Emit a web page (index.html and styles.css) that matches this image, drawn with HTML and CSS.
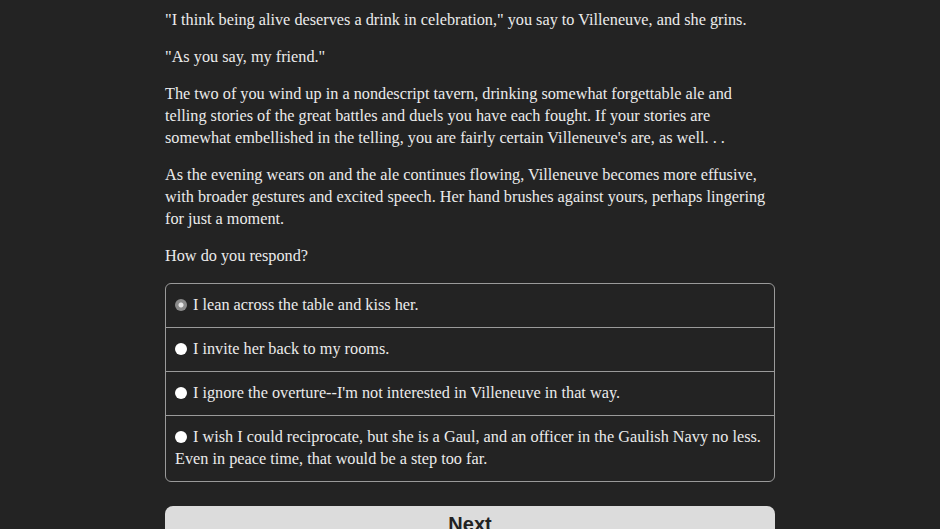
FILE: index.html
```html
<!DOCTYPE html>
<html>
<head>
<meta charset="utf-8">
<link rel="stylesheet" href="styles.css">
</head>
<body>
<main class="page">
  <p>"I think being alive deserves a drink in celebration," you say to Villeneuve, and she grins.</p>
  <p>"As you say, my friend."</p>
  <p>The two of you wind up in a nondescript tavern, drinking somewhat forgettable ale and telling stories of the great battles and duels you have each fought. If your stories are somewhat embellished in the telling, you are fairly certain Villeneuve's are, as well. . .</p>
  <p>As the evening wears on and the ale continues flowing, Villeneuve becomes more effusive, with broader gestures and excited speech. Her hand brushes against yours, perhaps lingering for just a moment.</p>
  <p>How do you respond?</p>
  <div class="choices">
    <label class="choice"><span class="radio radio-selected"></span>I lean across the table and kiss her.</label>
    <label class="choice"><span class="radio"></span>I invite her back to my rooms.</label>
    <label class="choice"><span class="radio"></span>I ignore the overture--I'm not interested in Villeneuve in that way.</label>
    <label class="choice"><span class="radio"></span>I wish I could reciprocate, but she is a Gaul, and an officer in the Gaulish Navy no less. Even in peace time, that would be a step too far.</label>
  </div>
  <button class="next">Next</button>
</main>
</body>
</html>
```
FILE: styles.css
```css
html, body {
  margin: 0;
  padding: 0;
  background: #232323;
}
body {
  color: #ebebeb;
  font-family: "Liberation Serif", "Times New Roman", serif;
  font-size: 16.25px;
  line-height: 22px;
}
.page {
  width: 610px;
  margin: 0 auto;
  padding-top: 9px;
}
.page p {
  margin: 0 0 15px 0;
}
.choices {
  border: 1px solid #9a9a9a;
  border-radius: 6px;
  margin-top: 16px;
}
.choice {
  display: block;
  padding: 10px 9px 11px 9px;
  border-top: 1px solid #9a9a9a;
}
.choice:first-child {
  border-top: none;
}
.radio {
  display: inline-block;
  width: 12px;
  height: 12px;
  border-radius: 50%;
  background: #ffffff;
  margin-right: 6px;
  vertical-align: -1px;
}
.radio-selected {
  background: radial-gradient(circle, #e6e6e6 0 2px, #8a8a8a 3px);
}
.next {
  display: block;
  width: 610px;
  height: 36px;
  margin-top: 24px;
  border: none;
  border-radius: 8px;
  background: #dcdcdc;
  color: #222;
  font-family: "Liberation Sans", Arial, sans-serif;
  font-weight: bold;
  font-size: 20px;
  padding: 0;
}
```
